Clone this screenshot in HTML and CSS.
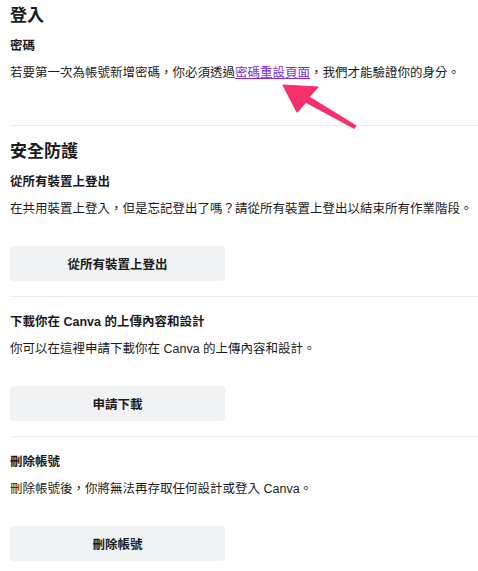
FILE: index.html
```html
<!DOCTYPE html>
<html>
  <head>
    <meta name="viewport" content="width=device-width,initial-scale=1.0">
    <title>帳號設定</title>
    <link rel="stylesheet" href="styles.css">
  </head>
  <body>
    <main class="settings">
      <section class="block first">
        <h2 class="blockTitle">登入</h2>
        <h3 class="itemTitle">密碼</h3>
        <p class="itemText">若要第一次為帳號新增密碼，你必須透過<a class="link" href="#">密碼重設頁面</a>，我們才能驗證你的身分。</p>
        <svg class="pointer" width="90" height="52" viewBox="0 0 90 52">
          <polygon points="8,5 43,7 34,16.9 80.8,45.7 79.2,48.3 31,22.1 22,32" fill="#f7306c" stroke="#f7306c" stroke-width="1.2" stroke-linejoin="round"/>
        </svg>
      </section>

      <section class="block second">
        <h2 class="blockTitle">安全防護</h2>
        <h3 class="itemTitle">從所有裝置上登出</h3>
        <p class="itemText">在共用裝置上登入，但是忘記登出了嗎？請從所有裝置上登出以結束所有作業階段。</p>
        <button class="btn">從所有裝置上登出</button>
      </section>

      <section class="block">
        <h3 class="itemTitle">下載你在 Canva 的上傳內容和設計</h3>
        <p class="itemText">你可以在這裡申請下載你在 Canva 的上傳內容和設計。</p>
        <button class="btn">申請下載</button>
      </section>

      <section class="block last">
        <h3 class="itemTitle">刪除帳號</h3>
        <p class="itemText">刪除帳號後，你將無法再存取任何設計或登入 Canva。</p>
        <button class="btn">刪除帳號</button>
      </section>
    </main>
  </body>
</html>
```

FILE: styles.css
```css
body{
  margin: 0;
  padding: 0;
  background-color: #ffffff;
  color: #1b1b1d;
  font-family: "Liberation Sans", "Noto Sans CJK TC", sans-serif;
}
.settings{
  padding-left: 10px;
}
.block{
  position: relative;
  display: flex;
  flex-direction: column;
  align-items: flex-start;
  padding: 16px 0px 15px;
  border-bottom: 1px solid #ececec;
}
.block.first{
  padding: 4px 0px 43px;
}
.block.second{
  padding-top: 14px;
}
.block.last{
  border-bottom: none;
}
.blockTitle{
  margin: 0 0 9px;
  font-size: 17px;
  line-height: 24px;
  font-weight: 700;
}
.itemTitle{
  margin: 0 0 9px;
  font-size: 12.5px;
  line-height: 18px;
  font-weight: 700;
}
.itemText{
  margin: 0;
  font-size: 12.5px;
  line-height: 18px;
  white-space: nowrap;
}
.link{
  color: #7d2ae8;
  text-decoration: underline;
}
.btn{
  margin-top: 28px;
  width: 215px;
  height: 35px;
  border: none;
  border-radius: 4px;
  background-color: #f1f2f4;
  color: #1b1b1d;
  font-family: inherit;
  font-size: 12.5px;
  font-weight: 700;
}
.pointer{
  position: absolute;
  left: 265px;
  top: 80px;
}
```
